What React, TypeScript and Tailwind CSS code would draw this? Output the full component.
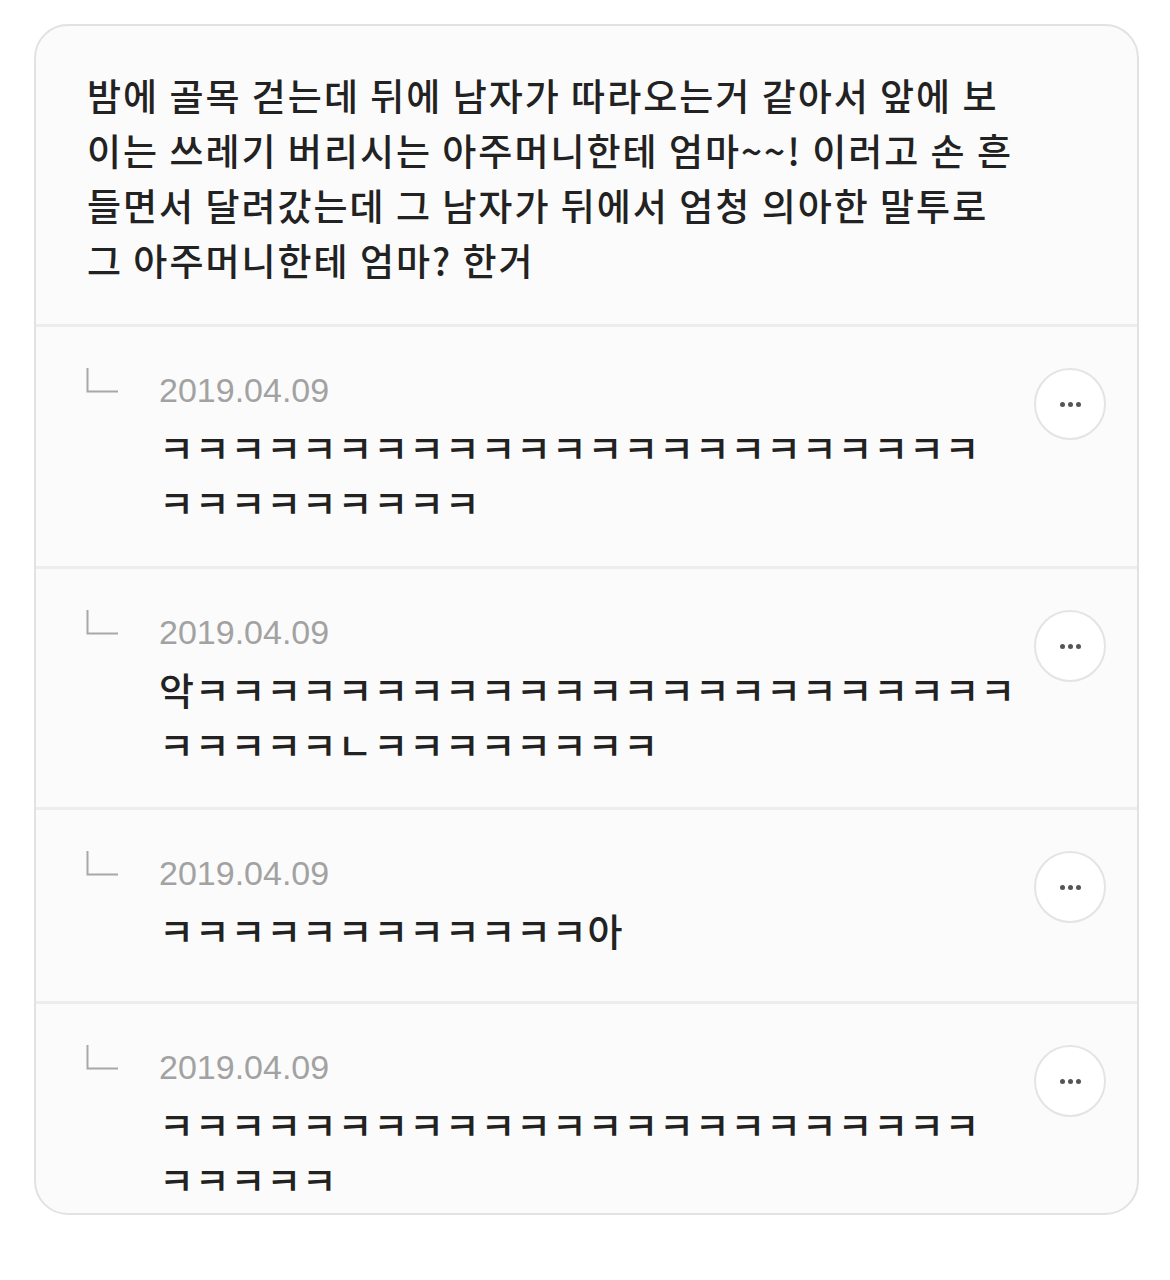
const post = [
  "밤에 골목 걷는데 뒤에 남자가 따라오는거 같아서 앞에 보",
  "이는 쓰레기 버리시는 아주머니한테 엄마~~! 이러고 손 흔",
  "들면서 달려갔는데 그 남자가 뒤에서 엄청 의아한 말투로",
  "그 아주머니한테 엄마? 한거",
];

const comments = [
  {
    date: "2019.04.09",
    lines: ["ㅋ".repeat(23), "ㅋ".repeat(9)],
    pb: "pb-[37px]",
  },
  {
    date: "2019.04.09",
    lines: ["악" + "ㅋ".repeat(23), "ㅋㅋㅋㅋㅋㄴ" + "ㅋ".repeat(8)],
    pb: "pb-[36px]",
  },
  {
    date: "2019.04.09",
    lines: ["ㅋ".repeat(12) + "아"],
    pb: "pb-[44px]",
  },
  {
    date: "2019.04.09",
    lines: ["ㅋ".repeat(23), "ㅋ".repeat(5)],
    pb: "pb-[7px]",
  },
];

function ReplyMark() {
  return (
    <svg width="32" height="25" viewBox="0 0 32 25" fill="none">
      <path d="M1.5 0 V23.5 H32" stroke="#a8a8a8" strokeWidth="2" />
    </svg>
  );
}

function MoreButton() {
  return (
    <div className="w-[72px] h-[72px] shrink-0 rounded-full border-2 border-[#e4e4e4] bg-white flex items-center justify-center gap-[3px]">
      <span className="w-[5px] h-[5px] rounded-full bg-[#555]" />
      <span className="w-[5px] h-[5px] rounded-full bg-[#555]" />
      <span className="w-[5px] h-[5px] rounded-full bg-[#555]" />
    </div>
  );
}

export default function App() {
  return (
    <div className="min-h-screen bg-white pt-[24px] pl-[34px]">
      <div className="w-[1105px] rounded-[34px] border-2 border-[#e2e2e2] bg-[#fbfbfb] overflow-hidden">
        {/* post body */}
        <div
          className="pl-[51px] pt-[42px] pb-[36px] text-[37px] leading-[55px] text-[#222] tracking-[2px] font-medium"
          style={{ fontFamily: '"Noto Sans CJK KR", "Noto Sans", sans-serif' }}
        >
          {post.map((l) => (
            <div key={l} className="whitespace-nowrap">{l}</div>
          ))}
        </div>

        {comments.map((c, i) => (
          <div key={i} className={`flex border-t-[3px] border-[#ededed] pt-[41px] pr-[31px] ${c.pb}`}>
            <div className="w-[123px] pl-[50px] shrink-0">
              <ReplyMark />
            </div>
            <div className="flex-1">
              <div
                className="text-[34px] leading-[44px] text-[#a2a2a2]"
                style={{ fontFamily: '"Liberation Sans", Arial, sans-serif' }}
              >
                {c.date}
              </div>
              <div
                className="mt-[7px] text-[38px] leading-[55px] text-[#222] tracking-[0.75px] font-medium"
                style={{ fontFamily: '"Noto Sans CJK KR", "Noto Sans", sans-serif' }}
              >
                {c.lines.map((l, j) => (
                  <div key={j} className="whitespace-nowrap">
                    {l}
                  </div>
                ))}
              </div>
            </div>
            <MoreButton />
          </div>
        ))}
      </div>
    </div>
  );
}
